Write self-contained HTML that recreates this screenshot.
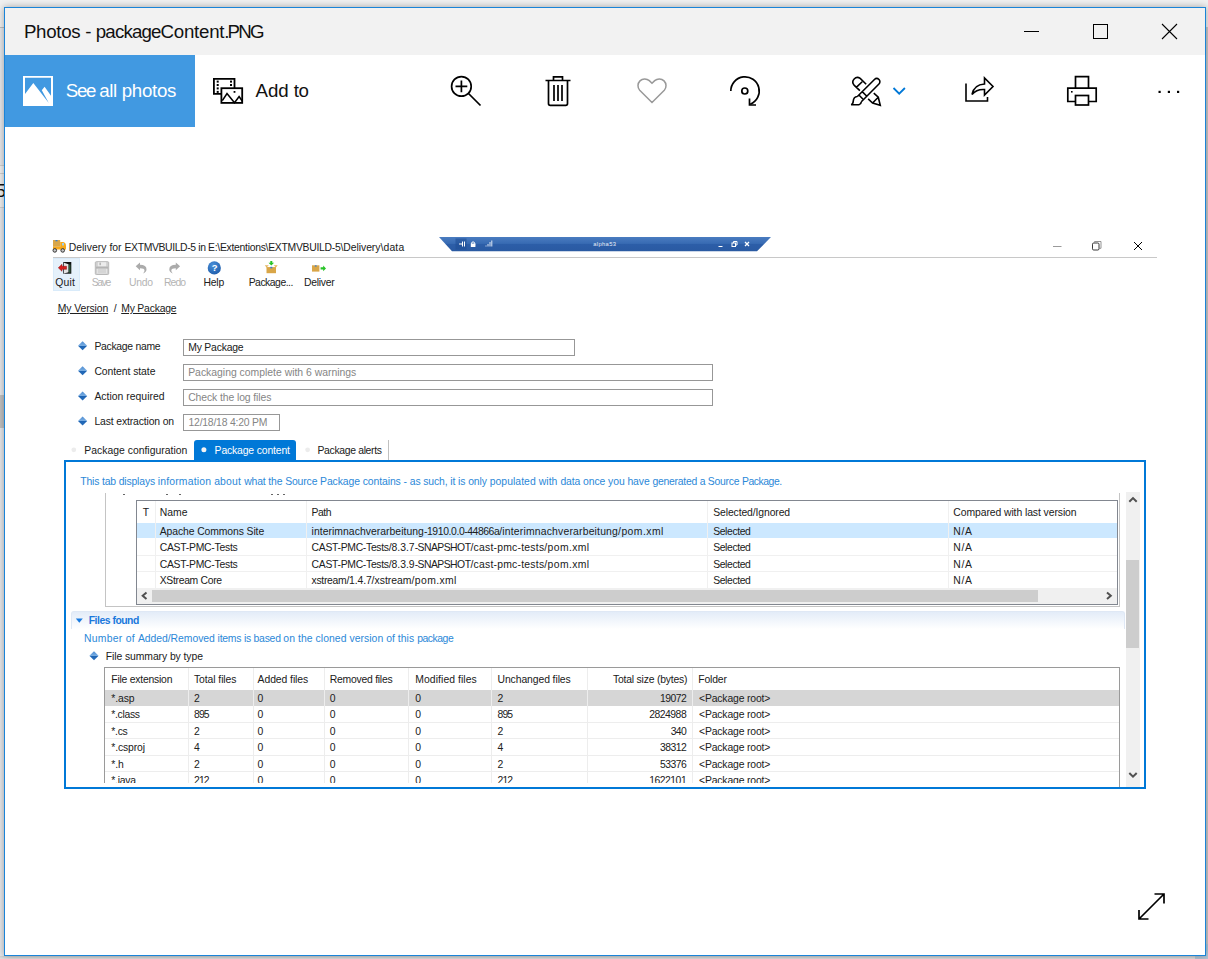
<!DOCTYPE html>
<html><head><meta charset="utf-8"><title>Photos - packageContent.PNG</title>
<style>
html,body{margin:0;padding:0;}
body{width:1208px;height:959px;overflow:hidden;position:relative;background:#f0f0f0;font-family:"Liberation Sans",sans-serif;}
.t{position:absolute;white-space:nowrap;line-height:20px;height:20px;display:block;}
.r{position:absolute;box-sizing:border-box;}
svg.ov{position:absolute;left:0;top:0;}
</style></head><body>
<div class="r" style="left:0px;top:0px;width:1208px;height:959px;background:#f0f0f0;"></div>
<div class="r" style="left:0px;top:27px;width:4px;height:1px;background:#bdbdbd;"></div>
<div class="r" style="left:0px;top:28px;width:4px;height:931px;background:#e6e7ea;"></div>
<div class="r" style="left:0px;top:165px;width:4px;height:1px;background:#cfcfcf;"></div>
<div class="r" style="left:0px;top:173px;width:4px;height:1px;background:#cfcfcf;"></div>
<div class="r" style="left:0px;top:207px;width:4px;height:1px;background:#cfcfcf;"></div>
<div class="r" style="left:0px;top:166px;width:4px;height:7px;background:#f0f0f0;"></div>
<div class="r" style="left:0px;top:174px;width:4px;height:33px;background:#efefef;"></div>
<div class="r" style="left:0px;top:395px;width:4px;height:33px;background:#c1c1c1;"></div>
<div class="r" style="left:1206px;top:27px;width:2px;height:932px;background:#c9c9c9;"></div>
<div class="r" style="left:0px;top:956px;width:1208px;height:3px;background:linear-gradient(180deg,#d0d0d0,#e2e2e2);"></div>
<span class="t" style="left:-4.50px;top:181px;font-size:19px;color:#111;">5</span>
<div class="r" style="left:1206px;top:944px;width:2px;height:15px;background:#a9c9dd;"></div>
<div class="r" style="left:1195px;top:956px;width:13px;height:3px;background:#b3c6d6;"></div>
<div class="r" style="left:4px;top:7px;width:1202px;height:949px;background:#fff;border:1px solid #1a84d8;box-shadow:0 0 7px rgba(0,0,0,0.33);"></div>
<div class="r" style="left:5px;top:8px;width:1200px;height:47px;background:#f2f2f2;"></div>
<span class="t" style="left:23.90px;top:22px;font-size:18.7px;color:#111;white-space:pre;"><span class="s" style="letter-spacing:-0.288px">Photos </span><span class="s" style="letter-spacing:-0.462px">- </span><span class="s" style="letter-spacing:-0.829px">package</span><span class="s" style="letter-spacing:-0.257px">Content</span><span class="s" style="letter-spacing:-1.840px">.PNG</span></span>
<div class="r" style="left:5px;top:55px;width:190px;height:72px;background:#4199e1;"></div>
<span class="t" style="left:65.70px;top:81px;font-size:18.7px;color:#fff;white-space:pre;"><span class="s" style="letter-spacing:-1.242px">See </span><span class="s" style="letter-spacing:-0.351px">all </span><span class="s" style="letter-spacing:-0.289px">photos</span></span>
<span class="t" style="left:255.50px;top:81px;font-size:18.7px;color:#111;white-space:pre;"><span class="s" style="letter-spacing:-0.042px">Add </span><span class="s" style="letter-spacing:-0.596px">to</span></span>
<div class="r" style="left:53px;top:257px;width:1104px;height:1px;background:#c8c8c8;"></div>
<span class="t" style="left:68.70px;top:238px;font-size:10.4px;color:#202020;white-space:pre;"><span class="s" style="letter-spacing:0.032px">Delivery for </span><span class="s" style="letter-spacing:-0.374px">EXTMVBUILD-5 in </span><span class="s" style="letter-spacing:-0.283px">E:\Extentions</span><span class="s" style="letter-spacing:-0.284px">\EXTMVBUILD-5</span><span class="s" style="letter-spacing:-0.050px">\Delivery</span><span class="s" style="letter-spacing:0.167px">\data</span></span>
<div class="r" style="left:53px;top:258px;width:27px;height:32.5px;background:#e5f1fb;border:1px solid #d9ebfa;"></div>
<span class="t" style="left:55.30px;top:273px;font-size:10.4px;color:#202020;letter-spacing:0.142px;">Quit</span>
<span class="t" style="left:91.70px;top:273px;font-size:10.4px;color:#b4b4b4;letter-spacing:-1.369px;">Save</span>
<span class="t" style="left:129.10px;top:273px;font-size:10.4px;color:#b4b4b4;letter-spacing:-0.321px;">Undo</span>
<span class="t" style="left:163.90px;top:273px;font-size:10.4px;color:#b4b4b4;letter-spacing:-0.888px;">Redo</span>
<span class="t" style="left:203.60px;top:273px;font-size:10.4px;color:#202020;letter-spacing:-0.263px;">Help</span>
<span class="t" style="left:248.70px;top:273px;font-size:10.4px;color:#202020;letter-spacing:-0.494px;">Package...</span>
<span class="t" style="left:304.00px;top:273px;font-size:10.4px;color:#202020;letter-spacing:-0.277px;">Deliver</span>
<span class="t" style="left:57.80px;top:299px;font-size:10.4px;color:#202020;letter-spacing:-0.105px;text-decoration:underline;">My Version</span>
<span class="t" style="left:113.70px;top:299px;font-size:10.4px;color:#202020;">/</span>
<span class="t" style="left:121.20px;top:299px;font-size:10.4px;color:#202020;letter-spacing:-0.192px;text-decoration:underline;">My Package</span>
<span class="t" style="left:94.40px;top:337px;font-size:10.4px;color:#202020;letter-spacing:-0.289px;">Package name</span>
<span class="t" style="left:94.40px;top:362px;font-size:10.4px;color:#202020;letter-spacing:-0.064px;">Content state</span>
<span class="t" style="left:94.40px;top:387px;font-size:10.4px;color:#202020;letter-spacing:0.018px;">Action required</span>
<span class="t" style="left:94.40px;top:412px;font-size:10.4px;color:#202020;letter-spacing:-0.135px;">Last extraction on</span>
<div class="r" style="left:183px;top:339.3px;width:392px;height:16.7px;background:#fff;border:1px solid #979797;"></div>
<div class="r" style="left:183px;top:364.2px;width:530px;height:16.7px;background:#fff;border:1px solid #979797;"></div>
<div class="r" style="left:183px;top:389.3px;width:530px;height:16.7px;background:#fff;border:1px solid #979797;"></div>
<div class="r" style="left:183px;top:414.2px;width:97.3px;height:16.7px;background:#fff;border:1px solid #979797;"></div>
<span class="t" style="left:188.20px;top:338px;font-size:10.4px;color:#202020;letter-spacing:-0.192px;">My Package</span>
<span class="t" style="left:188.20px;top:363px;font-size:10.4px;color:#858585;">Packaging complete with 6 warnings</span>
<span class="t" style="left:188.20px;top:388px;font-size:10.4px;color:#858585;letter-spacing:-0.093px;">Check the log files</span>
<span class="t" style="left:188.50px;top:413px;font-size:10.4px;color:#858585;letter-spacing:-0.214px;">12/18/18 4:20 PM</span>
<span class="t" style="left:84.30px;top:441px;font-size:10.4px;color:#202020;letter-spacing:0.009px;">Package configuration</span>
<div class="r" style="left:194px;top:439.7px;width:101.7px;height:21px;background:#0078d7;border-radius:3px 3px 0 0;"></div>
<span class="t" style="left:214.60px;top:441px;font-size:10.4px;color:#fff;letter-spacing:-0.148px;">Package content</span>
<span class="t" style="left:317.50px;top:441px;font-size:10.4px;color:#202020;letter-spacing:-0.330px;">Package alerts</span>
<div class="r" style="left:387.5px;top:440px;width:1px;height:21px;background:#c0c0c0;"></div>
<div class="r" style="left:64px;top:459.7px;width:1082px;height:329px;background:#fff;border:2.2px solid #0078d7;"></div>
<span class="t" style="left:80.20px;top:472px;font-size:10.4px;color:#2b88d8;white-space:pre;"><span class="s" style="letter-spacing:-0.153px">This tab displays </span><span class="s" style="letter-spacing:0.180px">information about </span><span class="s" style="letter-spacing:-0.128px">what the Source </span><span class="s" style="letter-spacing:-0.086px">Package contains - </span><span class="s" style="letter-spacing:-0.104px">as such, it is only </span><span class="s" style="letter-spacing:0.056px">populated with </span><span class="s" style="letter-spacing:-0.083px">data once you have </span><span class="s" style="letter-spacing:-0.245px">generated a Source </span><span class="s" style="letter-spacing:-0.438px">Package.</span></span>
<div class="r" style="left:104.5px;top:493px;width:1015px;height:114px;background:#fff;border:1px solid #c4c4c4;border-top:none;"></div>
<div class="r" style="left:123px;top:493.5px;width:1.5px;height:1.5px;background:#666;"></div>
<div class="r" style="left:166px;top:493.5px;width:1.5px;height:1.5px;background:#666;"></div>
<div class="r" style="left:179px;top:493.5px;width:2px;height:1.5px;background:#666;"></div>
<div class="r" style="left:271px;top:493.5px;width:1.5px;height:1.5px;background:#666;"></div>
<div class="r" style="left:277px;top:493.5px;width:1.5px;height:1.5px;background:#666;"></div>
<div class="r" style="left:283px;top:493.5px;width:2px;height:1.5px;background:#666;"></div>
<div class="r" style="left:135.7px;top:500px;width:982.3px;height:104.6px;background:#fff;border:1px solid #828790;"></div>
<div class="r" style="left:137px;top:522.8px;width:980px;height:15.2px;background:#cce8ff;"></div>
<div class="r" style="left:137px;top:555px;width:980px;height:1px;background:#f0f0f0;"></div>
<div class="r" style="left:137px;top:571.3px;width:980px;height:1px;background:#f0f0f0;"></div>
<div class="r" style="left:137px;top:587.6px;width:980px;height:1px;background:#f0f0f0;"></div>
<div class="r" style="left:154.5px;top:501px;width:1px;height:87px;background:#f0f0f0;"></div>
<div class="r" style="left:305.7px;top:501px;width:1px;height:87px;background:#f0f0f0;"></div>
<div class="r" style="left:707.4px;top:501px;width:1px;height:87px;background:#f0f0f0;"></div>
<div class="r" style="left:948.3px;top:501px;width:1px;height:87px;background:#f0f0f0;"></div>
<span class="t" style="left:142.80px;top:503px;font-size:10.4px;color:#202020;">T</span>
<span class="t" style="left:159.70px;top:503px;font-size:10.4px;color:#202020;letter-spacing:0.019px;">Name</span>
<span class="t" style="left:311.60px;top:503px;font-size:10.4px;color:#202020;letter-spacing:-0.498px;">Path</span>
<span class="t" style="left:713.20px;top:503px;font-size:10.4px;color:#202020;letter-spacing:-0.109px;">Selected/Ignored</span>
<span class="t" style="left:953.30px;top:503px;font-size:10.4px;color:#202020;letter-spacing:-0.081px;">Compared with last version</span>
<span class="t" style="left:159.70px;top:522px;font-size:10.4px;color:#202020;letter-spacing:-0.098px;">Apache Commons Site</span>
<span class="t" style="left:311.60px;top:522px;font-size:10.4px;color:#202020;white-space:pre;"><span class="s" style="letter-spacing:0.036px">interimnachverarbeitung</span><span class="s" style="letter-spacing:-0.394px">-1910.0.0</span><span class="s" style="letter-spacing:-0.453px">-44866a</span><span class="s" style="letter-spacing:0.185px">/interimnachverarbeitung</span><span class="s" style="letter-spacing:0.445px">/pom.xml</span></span>
<span class="t" style="left:713.20px;top:522px;font-size:10.4px;color:#202020;letter-spacing:-0.396px;">Selected</span>
<span class="t" style="left:953.30px;top:522px;font-size:10.4px;color:#202020;letter-spacing:0.681px;">N/A</span>
<span class="t" style="left:159.70px;top:538px;font-size:10.4px;color:#202020;letter-spacing:-0.260px;">CAST-PMC-Tests</span>
<span class="t" style="left:311.60px;top:538px;font-size:10.4px;color:#202020;white-space:pre;"><span class="s" style="letter-spacing:-0.305px">CAST-PMC-Tests</span><span class="s" style="letter-spacing:-0.020px">/8.3.7</span><span class="s" style="letter-spacing:-0.531px">-SNAPSHOT</span><span class="s" style="letter-spacing:0.227px">/cast-pmc-tests</span><span class="s" style="letter-spacing:0.388px">/pom.xml</span></span>
<span class="t" style="left:713.20px;top:538px;font-size:10.4px;color:#202020;letter-spacing:-0.396px;">Selected</span>
<span class="t" style="left:953.30px;top:538px;font-size:10.4px;color:#202020;letter-spacing:0.681px;">N/A</span>
<span class="t" style="left:159.70px;top:555px;font-size:10.4px;color:#202020;letter-spacing:-0.260px;">CAST-PMC-Tests</span>
<span class="t" style="left:311.60px;top:555px;font-size:10.4px;color:#202020;white-space:pre;"><span class="s" style="letter-spacing:-0.305px">CAST-PMC-Tests</span><span class="s" style="letter-spacing:-0.020px">/8.3.9</span><span class="s" style="letter-spacing:-0.531px">-SNAPSHOT</span><span class="s" style="letter-spacing:0.227px">/cast-pmc-tests</span><span class="s" style="letter-spacing:0.388px">/pom.xml</span></span>
<span class="t" style="left:713.20px;top:555px;font-size:10.4px;color:#202020;letter-spacing:-0.396px;">Selected</span>
<span class="t" style="left:953.30px;top:555px;font-size:10.4px;color:#202020;letter-spacing:0.681px;">N/A</span>
<span class="t" style="left:159.70px;top:571px;font-size:10.4px;color:#202020;letter-spacing:-0.308px;">XStream Core</span>
<span class="t" style="left:311.60px;top:571px;font-size:10.4px;color:#202020;white-space:pre;"><span class="s" style="letter-spacing:-0.312px">xstream</span><span class="s" style="letter-spacing:-0.137px">/1.4.7</span><span class="s" style="letter-spacing:0.016px">/xstream</span><span class="s" style="letter-spacing:0.388px">/pom.xml</span></span>
<span class="t" style="left:713.20px;top:571px;font-size:10.4px;color:#202020;letter-spacing:-0.396px;">Selected</span>
<span class="t" style="left:953.30px;top:571px;font-size:10.4px;color:#202020;letter-spacing:0.681px;">N/A</span>
<div class="r" style="left:137px;top:588px;width:980px;height:15.6px;background:#f0f0f0;"></div>
<div class="r" style="left:152px;top:589.6px;width:885.5px;height:12.2px;background:#cdcdcd;"></div>
<div class="r" style="left:1126px;top:492px;width:14px;height:294.5px;background:#f0f0f0;"></div>
<div class="r" style="left:1126.3px;top:559.7px;width:12.6px;height:88px;background:#cdcdcd;"></div>
<div class="r" style="left:70.5px;top:610.8px;width:1054px;height:18.5px;background:linear-gradient(180deg,#e3ecf8,#ffffff);border:1px solid #dfe8f5;border-bottom:none;border-radius:3px 3px 0 0;"></div>
<span class="t" style="left:88.70px;top:611px;font-size:10.4px;color:#1a78dc;letter-spacing:-0.476px;font-weight:bold;">Files found</span>
<span class="t" style="left:84.00px;top:629px;font-size:10.4px;color:#2b88d8;white-space:pre;"><span class="s" style="letter-spacing:0.256px">Number of </span><span class="s" style="letter-spacing:-0.047px">Added/Removed </span><span class="s" style="letter-spacing:-0.238px">items is based </span><span class="s" style="letter-spacing:0.061px">on the cloned </span><span class="s" style="letter-spacing:0.040px">version of this </span><span class="s" style="letter-spacing:-0.453px">package</span></span>
<span class="t" style="left:105.70px;top:647px;font-size:10.4px;color:#202020;letter-spacing:-0.080px;">File summary by type</span>
<div class="r" style="left:104.4px;top:667.4px;width:1015.5px;height:119px;background:#fff;border:1px solid #9a9a9a;border-bottom:none;"></div>
<div class="r" style="left:105.4px;top:690px;width:1013.5px;height:15.8px;background:#d6d6d6;"></div>
<div class="r" style="left:105.4px;top:722.1px;width:1013.5px;height:1px;background:#ededed;"></div>
<div class="r" style="left:105.4px;top:738.1px;width:1013.5px;height:1px;background:#ededed;"></div>
<div class="r" style="left:105.4px;top:754.7px;width:1013.5px;height:1px;background:#ededed;"></div>
<div class="r" style="left:105.4px;top:771.0px;width:1013.5px;height:1px;background:#ededed;"></div>
<div class="r" style="left:187.8px;top:668.4px;width:1px;height:118px;background:#ededed;"></div>
<div class="r" style="left:252.7px;top:668.4px;width:1px;height:118px;background:#ededed;"></div>
<div class="r" style="left:323.9px;top:668.4px;width:1px;height:118px;background:#ededed;"></div>
<div class="r" style="left:408.3px;top:668.4px;width:1px;height:118px;background:#ededed;"></div>
<div class="r" style="left:491.3px;top:668.4px;width:1px;height:118px;background:#ededed;"></div>
<div class="r" style="left:587.3px;top:668.4px;width:1px;height:118px;background:#ededed;"></div>
<div class="r" style="left:692px;top:668.4px;width:1px;height:118px;background:#ededed;"></div>
<span class="t" style="left:111.30px;top:670px;font-size:10.4px;color:#202020;letter-spacing:-0.228px;">File extension</span>
<span class="t" style="left:194.00px;top:670px;font-size:10.4px;color:#202020;letter-spacing:-0.085px;">Total files</span>
<span class="t" style="left:257.60px;top:670px;font-size:10.4px;color:#202020;letter-spacing:-0.076px;">Added files</span>
<span class="t" style="left:329.80px;top:670px;font-size:10.4px;color:#202020;letter-spacing:-0.250px;">Removed files</span>
<span class="t" style="left:415.30px;top:670px;font-size:10.4px;color:#202020;letter-spacing:0.062px;">Modified files</span>
<span class="t" style="left:497.50px;top:670px;font-size:10.4px;color:#202020;letter-spacing:-0.092px;">Unchanged files</span>
<span class="t" style="left:613.00px;top:670px;font-size:10.4px;color:#202020;letter-spacing:-0.207px;">Total size (bytes)</span>
<span class="t" style="left:698.30px;top:670px;font-size:10.4px;color:#202020;letter-spacing:-0.176px;">Folder</span>
<span class="t" style="left:111.30px;top:689px;font-size:10.4px;color:#202020;letter-spacing:-0.126px;">*.asp</span>
<span class="t" style="left:194.00px;top:689px;font-size:10.4px;color:#202020;letter-spacing:-0.584px;">2</span>
<span class="t" style="left:257.60px;top:689px;font-size:10.4px;color:#202020;letter-spacing:-0.584px;">0</span>
<span class="t" style="left:329.80px;top:689px;font-size:10.4px;color:#202020;letter-spacing:-0.584px;">0</span>
<span class="t" style="left:415.30px;top:689px;font-size:10.4px;color:#202020;letter-spacing:-0.584px;">0</span>
<span class="t" style="left:497.50px;top:689px;font-size:10.4px;color:#202020;letter-spacing:-0.584px;">2</span>
<span class="t" style="left:659.95px;top:689px;font-size:10.4px;color:#202020;letter-spacing:-0.543px;">19072</span>
<span class="t" style="left:699.00px;top:689px;font-size:10.4px;color:#202020;letter-spacing:-0.156px;">&lt;Package root&gt;</span>
<span class="t" style="left:111.30px;top:705px;font-size:10.4px;color:#202020;letter-spacing:-0.322px;">*.class</span>
<span class="t" style="left:194.00px;top:705px;font-size:10.4px;color:#202020;letter-spacing:-0.876px;">895</span>
<span class="t" style="left:257.60px;top:705px;font-size:10.4px;color:#202020;letter-spacing:-0.584px;">0</span>
<span class="t" style="left:329.80px;top:705px;font-size:10.4px;color:#202020;letter-spacing:-0.584px;">0</span>
<span class="t" style="left:415.30px;top:705px;font-size:10.4px;color:#202020;letter-spacing:-0.584px;">0</span>
<span class="t" style="left:497.50px;top:705px;font-size:10.4px;color:#202020;letter-spacing:-0.876px;">895</span>
<span class="t" style="left:649.25px;top:705px;font-size:10.4px;color:#202020;letter-spacing:-0.507px;">2824988</span>
<span class="t" style="left:699.00px;top:705px;font-size:10.4px;color:#202020;letter-spacing:-0.156px;">&lt;Package root&gt;</span>
<span class="t" style="left:111.30px;top:722px;font-size:10.4px;color:#202020;letter-spacing:-0.279px;">*.cs</span>
<span class="t" style="left:194.00px;top:722px;font-size:10.4px;color:#202020;letter-spacing:-0.584px;">2</span>
<span class="t" style="left:257.60px;top:722px;font-size:10.4px;color:#202020;letter-spacing:-0.584px;">0</span>
<span class="t" style="left:329.80px;top:722px;font-size:10.4px;color:#202020;letter-spacing:-0.584px;">0</span>
<span class="t" style="left:415.30px;top:722px;font-size:10.4px;color:#202020;letter-spacing:-0.584px;">0</span>
<span class="t" style="left:497.50px;top:722px;font-size:10.4px;color:#202020;letter-spacing:-0.584px;">2</span>
<span class="t" style="left:670.65px;top:722px;font-size:10.4px;color:#202020;letter-spacing:-0.651px;">340</span>
<span class="t" style="left:699.00px;top:722px;font-size:10.4px;color:#202020;letter-spacing:-0.156px;">&lt;Package root&gt;</span>
<span class="t" style="left:111.30px;top:738px;font-size:10.4px;color:#202020;letter-spacing:-0.140px;">*.csproj</span>
<span class="t" style="left:194.00px;top:738px;font-size:10.4px;color:#202020;letter-spacing:-0.584px;">4</span>
<span class="t" style="left:257.60px;top:738px;font-size:10.4px;color:#202020;letter-spacing:-0.584px;">0</span>
<span class="t" style="left:329.80px;top:738px;font-size:10.4px;color:#202020;letter-spacing:-0.584px;">0</span>
<span class="t" style="left:415.30px;top:738px;font-size:10.4px;color:#202020;letter-spacing:-0.584px;">0</span>
<span class="t" style="left:497.50px;top:738px;font-size:10.4px;color:#202020;letter-spacing:-0.584px;">4</span>
<span class="t" style="left:659.95px;top:738px;font-size:10.4px;color:#202020;letter-spacing:-0.543px;">38312</span>
<span class="t" style="left:699.00px;top:738px;font-size:10.4px;color:#202020;letter-spacing:-0.156px;">&lt;Package root&gt;</span>
<span class="t" style="left:111.30px;top:755px;font-size:10.4px;color:#202020;letter-spacing:-0.060px;">*.h</span>
<span class="t" style="left:194.00px;top:755px;font-size:10.4px;color:#202020;letter-spacing:-0.584px;">2</span>
<span class="t" style="left:257.60px;top:755px;font-size:10.4px;color:#202020;letter-spacing:-0.584px;">0</span>
<span class="t" style="left:329.80px;top:755px;font-size:10.4px;color:#202020;letter-spacing:-0.584px;">0</span>
<span class="t" style="left:415.30px;top:755px;font-size:10.4px;color:#202020;letter-spacing:-0.584px;">0</span>
<span class="t" style="left:497.50px;top:755px;font-size:10.4px;color:#202020;letter-spacing:-0.584px;">2</span>
<span class="t" style="left:659.95px;top:755px;font-size:10.4px;color:#202020;letter-spacing:-0.543px;">53376</span>
<span class="t" style="left:699.00px;top:755px;font-size:10.4px;color:#202020;letter-spacing:-0.156px;">&lt;Package root&gt;</span>
<span class="t" style="left:111.30px;top:771px;font-size:10.4px;color:#202020;letter-spacing:-0.263px;">*.java</span>
<span class="t" style="left:194.00px;top:771px;font-size:10.4px;color:#202020;letter-spacing:-0.876px;">212</span>
<span class="t" style="left:257.60px;top:771px;font-size:10.4px;color:#202020;letter-spacing:-0.584px;">0</span>
<span class="t" style="left:329.80px;top:771px;font-size:10.4px;color:#202020;letter-spacing:-0.584px;">0</span>
<span class="t" style="left:415.30px;top:771px;font-size:10.4px;color:#202020;letter-spacing:-0.584px;">0</span>
<span class="t" style="left:497.50px;top:771px;font-size:10.4px;color:#202020;letter-spacing:-0.876px;">212</span>
<span class="t" style="left:649.25px;top:771px;font-size:10.4px;color:#202020;letter-spacing:-0.507px;">1622101</span>
<span class="t" style="left:699.00px;top:771px;font-size:10.4px;color:#202020;letter-spacing:-0.156px;">&lt;Package root&gt;</span>
<div class="r" style="left:66px;top:782.5px;width:1060px;height:4px;background:#fff;"></div>
<div class="r" style="left:1119px;top:668px;width:1px;height:118.5px;background:#9a9a9a;"></div>
<div class="r" style="left:64px;top:459.7px;width:1082px;height:329px;border:2.2px solid #0078d7;"></div>
<svg class="ov" width="1208" height="959" viewBox="0 0 1208 959">
<path d="M1024 31.5h15" stroke="#000" stroke-width="1" fill="none"/>
<rect x="1093.5" y="24.5" width="14" height="14" stroke="#000" stroke-width="1" fill="none"/>
<path d="M1162 24l15 15M1177 24l-15 15" stroke="#000" stroke-width="1.1" fill="none"/>
<rect x="23" y="76" width="30" height="30" fill="#fff"/>
<path d="M25 77.800L51 77.800L51 95.700L44.600 86.800L41.800 90.200L48.800 103L33.300 83L25 94z" fill="#4199e1"/>
<g fill="none" stroke="#000" stroke-width="1.8"><path d="M221.400 93.900h-7.500v-15h20.600v9.300"/><rect x="221.400" y="88.200" width="20.800" height="14.700"/><path d="M222.300 100.600l4.700 -7l7.500 9.200l4.600 -6.200l3.300 4.600" stroke-width="1.600"/></g>
<g fill="#000"><rect x="216.700" y="80.600" width="2" height="2"/><rect x="216.700" y="84" width="2" height="2"/><rect x="216.700" y="87.400" width="2" height="2"/><rect x="216.700" y="90.900" width="2" height="2"/><rect x="230" y="80.600" width="2" height="2"/><rect x="230" y="84" width="2" height="2"/><rect x="233.600" y="91" width="1.800" height="1.800"/></g>
<g fill="none" stroke="#000" stroke-width="1.7"><circle cx="461.4" cy="86.4" r="9.8"/><path d="M468.5 93.5l12 12M455.5 86.4h11.8M461.4 80.5v11.8"/></g>
<g fill="none" stroke="#000" stroke-width="1.7"><path d="M545.5 80.5h25M553.5 80v-3.2h9v3.2M548.5 81v22.5q0 1.8 1.8 1.8h15.4q1.8 0 1.8 -1.8v-22.500M554 85v16M558 85v16M562 85v16"/></g>
<path d="M652 102.500l-12.300 -12.300a6.800 6.800 0 0 1 9.600 -9.600l2.700 2.700l2.700 -2.700a6.800 6.800 0 0 1 9.600 9.600z" fill="none" stroke="#999" stroke-width="1.5"/>
<g fill="none" stroke="#000" stroke-width="1.7"><path d="M730.800 91a14.200 14.200 0 1 1 19.500 13.200"/><path d="M749.500 98.500v6.500h6.500"/><circle cx="744.800" cy="91" r="3"/></g>
<g fill="none" stroke="#000" stroke-width="1.6"><path d="M866.16 84.24L860.20 78.48A4.55 4.55 0 0 0 854.04 85.10L859.87 90.66 M862.19 81.79L856.56 87.09 M873.77 93.18L878.28 97.28L880.26 105.23L872.58 102.98L868.15 98.81 M878.28 97.28L872.58 102.98 M857.35 96.49L874.44 79.47A3.2 3.2 0 0 1 878.94 84.04L861.32 101.79 M862.19 91.66L866.36 95.70M858.87 95.03L862.85 99.01 M857.35 96.49Q853.58 96.82 853.25 101.13Q853.11 104.11 851.13 104.77L858.87 104.77Q861.06 104.11 861.32 101.79"/></g>
<path d="M893.500 88l5.700 5.700l5.700 -5.700" fill="none" stroke="#0078d7" stroke-width="1.8"/>
<g fill="none" stroke="#000" stroke-width="1.6" stroke-linejoin="miter"><path d="M966 83.500v17.500h21.500v-4"/><path d="M972 94.500q2 -10 12.500 -10.500v-6l8.500 8.500l-8.500 8.500v-5.500q-8 -0.500 -12.500 5z"/></g>
<g fill="none" stroke="#000" stroke-width="1.7"><path d="M1075.500 88v-11.300h13v11.300M1075.500 101.500h-7.700v-13.300h28.400v13.300h-7.700"/><rect x="1075.500" y="95.500" width="13" height="9.500"/></g><rect x="1071" y="91" width="1.600" height="1.600" fill="#000"/>
<g fill="#000"><rect x="1158.500" y="90.800" width="2.200" height="2.200"/><rect x="1167.800" y="90.800" width="2.200" height="2.200"/><rect x="1177" y="90.800" width="2.200" height="2.200"/></g>
<g fill="none" stroke="#000" stroke-width="1.7"><path d="M1139 919l25 -25M1154.500 894h9.500v9.500M1139 910v9h9.500"/></g>
<circle cx="73.8" cy="449.800" r="2.400" fill="#ececec"/><circle cx="203.900" cy="449.800" r="2.500" fill="#f4f4f4"/><circle cx="307.6" cy="449.800" r="2.400" fill="#ececec"/>
<path d="M146.500 592.600l-3.800 3.200l3.800 3.200" fill="none" stroke="#505050" stroke-width="2"/><path d="M1107 592.600l3.800 3.200l-3.800 3.200" fill="none" stroke="#505050" stroke-width="2"/>
<path d="M1129.300 501.800l3.700 -3.700l3.700 3.700" fill="none" stroke="#505050" stroke-width="2"/><path d="M1129.300 773l3.700 3.700l3.700 -3.700" fill="none" stroke="#505050" stroke-width="2"/>
<path d="M75.800 618.500h7l-3.500 4.200z" fill="#1a7be0"/>
<defs>
<linearGradient id="dg" x1="0" y1="0" x2="0" y2="1"><stop offset="0" stop-color="#4d8cd2"/><stop offset="0.5" stop-color="#7aaee2"/><stop offset="0.5" stop-color="#1d63b3"/><stop offset="1" stop-color="#2a6fbc"/></linearGradient>
<linearGradient id="rdp" x1="0" y1="0" x2="0" y2="1"><stop offset="0" stop-color="#4a7cc0"/><stop offset="0.45" stop-color="#386bb3"/><stop offset="0.5" stop-color="#2c5ea8"/><stop offset="1" stop-color="#2a5aa2"/></linearGradient>
<radialGradient id="hg" cx="0.4" cy="0.3" r="0.8"><stop offset="0" stop-color="#4a90d9"/><stop offset="1" stop-color="#1c5aa8"/></radialGradient>
</defs>
<path d="M78.0 345.8L82.6 341.3L87.19999999999999 345.8L82.6 350.3z" fill="url(#dg)"/>
<path d="M78.0 370.85L82.6 366.35L87.19999999999999 370.85L82.6 375.35z" fill="url(#dg)"/>
<path d="M78.0 395.90000000000003L82.6 391.40000000000003L87.19999999999999 395.90000000000003L82.6 400.40000000000003z" fill="url(#dg)"/>
<path d="M78.0 420.95000000000005L82.6 416.45000000000005L87.19999999999999 420.95000000000005L82.6 425.45000000000005z" fill="url(#dg)"/>
<path d="M89.4 655.8L94 651.3L98.6 655.8L94 660.3z" fill="url(#dg)"/>
<path d="M439 237h332l-14 14.300h-305z" fill="url(#rdp)"/>
<rect x="455.500" y="238.500" width="11" height="11" fill="#1f4f96" opacity="0.6"/>
<g stroke="#fff" stroke-width="1" fill="none"><path d="M459 244h3M462.500 241.500v5M464.500 241.500v5"/><path d="M471.500 245.500v-2a1.600 1.600 0 0 1 3.200 0v2" /><path d="M486 246.500v-1M488 246.500v-2.500M490 246.500v-4.500M491.800 246.500v-6" stroke="#dfe8f5"/><path d="M718.500 246.500h4"/><rect x="732" y="243" width="3.500" height="3.500"/><path d="M733.500 243v-1.500h3.500v3.500h-1.500"/><path d="M745 242l4 4M749 242l-4 4" stroke-width="1.300"/></g><rect x="470.800" y="243.500" width="4.600" height="3.500" fill="#fff"/>
<text x="593.2" y="246.300" font-size="5.800" fill="#e8eef8" font-family="Liberation Sans, sans-serif" textLength="22.800">alpha53</text>
<g fill="none" stroke="#9a9a9a" stroke-width="1"><path d="M1053 246.500h8.500"/></g>
<g fill="none" stroke="#222" stroke-width="0.900"><rect x="1092.500" y="243" width="6.500" height="7" rx="1.200"/><path d="M1094.500 243v-1.500h6.500v6.800h-2" stroke="#888"/><path d="M1134 242l8 8M1142 242l-8 8" stroke="#000" stroke-width="1"/></g>
<g><rect x="53" y="240" width="7.200" height="6.800" fill="#d9a648"/><rect x="55.500" y="240" width="2" height="1.300" fill="#3b7ed0"/><path d="M60.200 242h3q2.800 0.500 2.800 4v3.500h-13v-2.700h7.200z" fill="#f7a81b"/><rect x="62" y="243" width="2" height="2.500" fill="#9fd0e8"/><circle cx="54.800" cy="250.400" r="1.800" fill="#c8c8c8" stroke="#333" stroke-width="1"/><circle cx="62.700" cy="250.400" r="1.800" fill="#c8c8c8" stroke="#333" stroke-width="1"/></g>
<g><rect x="63.300" y="262" width="8" height="11.700" fill="#111"/><path d="M64 262.800l4.500 1.500v8l-4.500 1.200z" fill="#e4e4e4"/><path d="M68.800 264.500h1.700v8.200h-1.700z" fill="#2e5a3c"/><path d="M58.300 267.800l3.700 -3.500v2h4.500v3h-4.500v2z" fill="#d61f1f" stroke="#8a1010" stroke-width="0.500"/></g>
<g><rect x="95.300" y="261.700" width="13.400" height="12.800" rx="1" fill="#d0d0d0" stroke="#b8b8b8" stroke-width="1"/><rect x="97.800" y="262.200" width="8.400" height="4.300" fill="#ececec"/><rect x="96" y="266.600" width="12" height="2" fill="#b4b4b4"/><rect x="97" y="268.800" width="10" height="4.800" fill="#e4e4e4"/><rect x="99.500" y="262.600" width="1.300" height="2.600" fill="#aaa"/><path d="M98 270h8M98 272h8" stroke="#bbb" stroke-width="0.700"/></g>
<path d="M135.700 266.300l4.300 -3.800v2.300q6.500 0 6.500 4.500q0 3 -3.500 4.200q1.500 -1.500 1.500 -3q0 -2.200 -4.500 -2.200v2z" fill="#ababab"/>
<path d="M180.100 266.300l-4.300 -3.800v2.300q-6.500 0 -6.500 4.500q0 3 3.500 4.200q-1.500 -1.500 -1.500 -3q0 -2.200 4.500 -2.200v2z" fill="#ababab"/>
<circle cx="214.300" cy="267.900" r="6.600" fill="url(#hg)"/>
<text x="211.700" y="271.300" font-size="9.500" font-weight="bold" fill="#fff" font-family="Liberation Sans, sans-serif">?</text>
<g><path d="M266.500 267h9.500v6.200h-9.500z" fill="#d9a648"/><path d="M264.800 265.200h4l-1.800 1.800h8.500l-1.800 -1.800h4l-1.700 2.300h-9.500z" fill="#e3b45c"/><rect x="270.300" y="266.800" width="2" height="1.500" fill="#3b7ed0"/><path d="M271.300 265.500l-2.800 -2.700h1.800v-1.800h2v1.800h1.800z" fill="#27c327"/></g>
<g><rect x="312" y="265.300" width="7.400" height="6.300" fill="#d9a648"/><rect x="314.800" y="265.300" width="1.800" height="1.300" fill="#3b7ed0"/><path d="M326 268.400l-2.800 -2.800v1.700h-2.600v2.200h2.600v1.700z" fill="#27c327"/></g>
</svg>
</body></html>
